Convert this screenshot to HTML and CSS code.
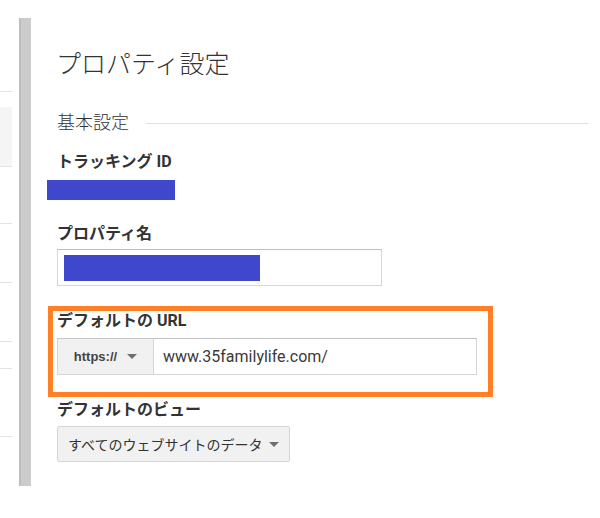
FILE: index.html
```html
<!DOCTYPE html>
<html lang="ja">
<head>
<meta charset="utf-8">
<title>プロパティ設定</title>
<link rel="stylesheet" href="styles.css">
</head>
<body>
<div class="page">
  <div class="nav">
    <div class="nav-row h91"></div>
    <div class="nav-gap"></div>
    <div class="nav-row nav-active"></div>
    <div class="nav-row h56"></div>
    <div class="nav-row h58"></div>
    <div class="nav-row h58"></div>
    <div class="nav-row h26"></div>
    <div class="nav-row h67"></div>
  </div>
  <div class="divider"></div>
  <main class="content">
    <h1 class="title">プロパティ設定</h1>
    <div class="section-head">
      <span class="section-name">基本設定</span>
      <span class="section-rule"></span>
    </div>
    <div class="label label-tracking">トラッキング ID</div>
    <div class="redact redact-id"></div>
    <div class="label label-name">プロパティ名</div>
    <div class="text-input">
      <div class="redact redact-name"></div>
    </div>
    <div class="highlight">
      <div class="label">デフォルトの URL</div>
      <div class="url-group">
        <div class="proto">https:// <span class="caret"></span></div>
        <div class="url-field">www.35familylife.com/</div>
      </div>
    </div>
    <div class="label label-view">デフォルトのビュー</div>
    <div class="view-select">すべてのウェブサイトのデータ <span class="caret"></span></div>
  </main>
</div>
</body>
</html>
```

FILE: styles.css
```css
html, body {
  margin: 0;
  padding: 0;
  background: #ffffff;
}
body {
  width: 600px;
  height: 518px;
  overflow: hidden;
  font-family: "Roboto", "Noto Sans CJK JP", sans-serif;
  color: #333333;
}
.page {
  display: flex;
  align-items: flex-start;
}
.nav {
  width: 12px;
  display: flex;
  flex-direction: column;
}
.nav-row {
  border-bottom: 1px solid #e3e3e3;
}
.h91 { height: 91px; }
.nav-gap { height: 15px; }
.nav-active { height: 59px; background: #f5f5f5; }
.h56 { height: 56px; }
.h58 { height: 58px; }
.h26 { height: 26px; }
.h67 { height: 67px; }

.divider {
  margin-left: 7px;
  margin-top: 18px;
  width: 10px;
  height: 468px;
  background: #cccccc;
  border-left: 2px solid #bdbdbd;
}

.content {
  flex: 1;
  padding: 0 12px 0 26px;
  display: flex;
  flex-direction: column;
  align-items: flex-start;
}
.title {
  margin: 47px 0 0 -1px;
  font-size: 25px;
  line-height: 30px;
  font-weight: 300;
  color: #333333;
  font-family: "Noto Sans CJK JP", sans-serif;
}
.section-head {
  margin-top: 32px;
  align-self: stretch;
  display: flex;
  align-items: flex-start;
  gap: 17px;
}
.section-name {
  font-family: "Noto Sans CJK JP", sans-serif;
  font-size: 18px;
  line-height: 24px;
  font-weight: 300;
  color: #333333;
}
.section-rule {
  flex: 1;
  height: 1px;
  margin-top: 14px;
  background: #e0e0e0;
}
.label {
  font-size: 16px;
  line-height: 20px;
  font-weight: 700;
  color: #333333;
}
.label-tracking { margin-top: 19px; }
.redact {
  background: #3f48cc;
}
.redact-id {
  margin: 8px 0 0 -10px;
  width: 128px;
  height: 20px;
}
.label-name { margin-top: 24px; }
.text-input {
  margin-top: 5px;
  width: 325px;
  height: 37px;
  box-sizing: border-box;
  border: 1px solid #d6d6d6;
  border-top-color: #bfbfbf;
  padding: 5px 0 0 6px;
}
.redact-name {
  width: 196px;
  height: 26px;
}
.highlight {
  margin: 20px 0 0 -9px;
  width: 445px;
  box-sizing: border-box;
  border: 5px solid #ff7f27;
  padding: 0 0 17px 4px;
}
.url-group {
  margin-top: 7px;
  display: flex;
  width: 420px;
  height: 37px;
}
.proto {
  width: 96px;
  box-sizing: border-box;
  border: 1px solid #d6d6d6;
  border-top-color: #c8c8c8;
  border-right: none;
  background: #f1f1f1;
  display: flex;
  align-items: center;
  justify-content: center;
  gap: 10px;
  font-family: "Liberation Sans", sans-serif;
  font-weight: 700;
  font-size: 13px;
  color: #444444;
}
.caret {
  width: 0;
  height: 0;
  border-left: 5px solid transparent;
  border-right: 5px solid transparent;
  border-top: 5px solid #6e6e6e;
}
.url-field {
  flex: 1;
  box-sizing: border-box;
  border: 1px solid #d6d6d6;
  border-top-color: #bfbfbf;
  padding-left: 9px;
  display: flex;
  align-items: center;
  font-size: 16px;
  color: #3a3a3a;
}
.label-view { margin-top: 3px; }
.view-select {
  margin-top: 6px;
  width: 233px;
  height: 36px;
  box-sizing: border-box;
  border: 1px solid #d6d6d6;
  border-radius: 2px;
  background: #f1f1f1;
  padding: 0 10px 0 10px;
  display: flex;
  align-items: center;
  justify-content: space-between;
  font-family: "Noto Sans CJK JP", sans-serif;
  font-size: 14px;
  color: #333333;
}
```
